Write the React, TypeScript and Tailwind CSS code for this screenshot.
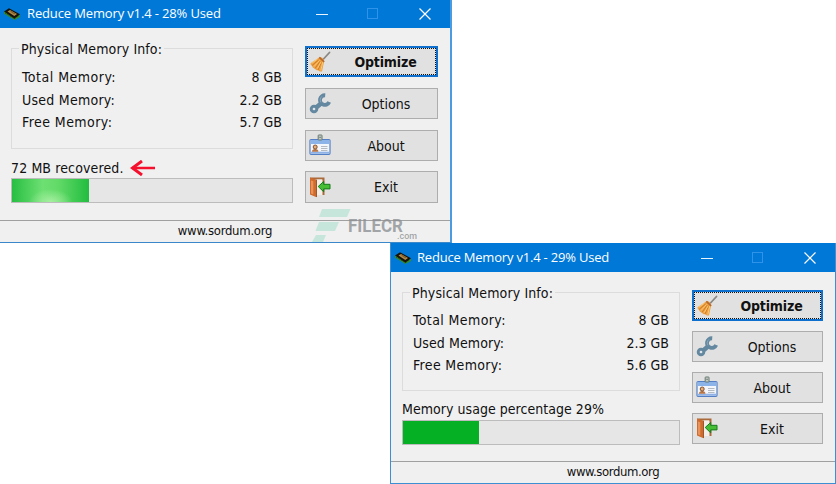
import type { ReactNode } from "react";

function ChipIcon() {
  return (
    <svg viewBox="0 0 18 14" className="h-[14px] w-[18px] shrink-0">
      <path d="M1 5 5 2.500 9 4l8 4.500v1.600L11.500 13 1 6.800z" fill="#2f8f2f" />
      <path d="M1 4.500 6 1.200 17 7.200 11.500 11.800z" fill="#15120c" />
      <path d="M4.500 4.400 7 3 14 6.900 11.300 8.900z" fill="#b08a48" />
      <path d="M7 4.600 8.300 4 12.400 6.400 11.200 7.300z" fill="#7d5f30" />
      <path d="M2 6 11.300 11.600l4.400-3" fill="none" stroke="#3d3414" strokeWidth=".8" strokeDasharray="1 1" />
    </svg>
  );
}

function BroomIcon() {
  return (
    <svg viewBox="0 0 22 22" className="size-[22px]">
      <path d="M20.500 1.500 14.500 8" stroke="#8b8783" strokeWidth="1.800" strokeLinecap="round" />
      <path d="M10.500 6.200c1.800-.6 4.800 2 4.600 4.200L13 20.500c-1.500.3-3-.2-4-1.200-1.300.2-2.300-.5-2.900-1.600-1.700-.4-2.700-1.300-3-2.700-.9-.6-1.500-1.500-1.600-2.800z" fill="#eda044" />
      <path d="M9.500 9 3 14.500M11 10.200 6 17.500M12.500 11.200 9 19" stroke="#c9741f" strokeWidth=".8" />
      <path d="M8.500 8 2.800 12.300M10.500 9.500 5 15.500M12 11 8.300 17.500M13.800 11 11.800 19.500" stroke="#ffd27a" strokeWidth=".8" />
      <path d="m10.300 6.300 4.900 4.500" stroke="#b46a2e" strokeWidth="1.600" />
    </svg>
  );
}

function WrenchIcon() {
  return (
    <svg viewBox="0 0 22 22" className="size-[22px]">
      <path d="m6 15.500 6-5" stroke="#6388a0" strokeWidth="4.600" />
      <path d="M16.200 2.300A4.800 4.800 0 1 0 20.200 9" fill="none" stroke="#6388a0" strokeWidth="3.900" />
      <circle cx="5" cy="16" r="2.800" fill="#dfe5e8" stroke="#6388a0" strokeWidth="2.900" />
      <path d="M13 3.300c-2 1.700-2.200 4.200-1.100 6" stroke="#8eacba" strokeWidth=".9" fill="none" />
    </svg>
  );
}

function CardIcon() {
  return (
    <svg viewBox="0 0 22 22" className="-mt-[2px] size-[22px]">
      <rect x="1" y="5.500" width="20" height="14.800" rx="1" fill="#f3f7fc" stroke="#557fc4" strokeWidth="1.200" />
      <path d="M1.600 6h18.800v4H1.600z" fill="#8db4e8" />
      <path d="M1.600 18.700h18.800" stroke="#8fb2e6" strokeWidth="2" />
      <rect x="9.200" y="1" width="3.800" height="5" rx=".5" fill="#c4cec7" stroke="#66766e" />
      <path d="M10.300 3.300h1.600" stroke="#66766e" />
      <path d="M3 17.800c0-2 1.200-2.800 3.200-2.800s3.200.8 3.200 2.800z" fill="#b87545" />
      <circle cx="6.200" cy="13" r="2" fill="#e9ae76" stroke="#75452a" strokeWidth=".9" />
      <path d="M12 12.500h6.500M12 14.500h6.500M12 16.500h6.500" stroke="#adb2b8" strokeWidth=".9" />
    </svg>
  );
}

function DoorIcon() {
  return (
    <svg viewBox="0 0 22 22" className="-mt-px size-[22px]">
      <path d="M1 1.500h14.500V19H13V3.500H2z" fill="#a96a3c" />
      <path d="M8 3.500h5.500V19H8z" fill="#f3efe8" />
      <path d="M1 1.500 7.500 3.800v17.400L1 18.500z" fill="#cf6b2c" />
      <path d="m2 4.500 2.300.7v13.300L2 17.600z" fill="#e9935a" />
      <path d="M7.500 4v17" stroke="#8d4317" strokeWidth=".8" />
      <path d="m9.200 10.500 5.500-5v2.800h6.300v4.600h-6.300v2.900z" fill="#45bd35" stroke="#167b1c" strokeWidth="1" />
    </svg>
  );
}

function ActionButton({ icon, label, primary, size }: { icon: ReactNode; label: string; primary?: boolean; size: string }) {
  return (
    <button
      className={`relative flex items-center bg-[#e1e1e1] ${size} ${
        primary ? "border-2 border-[#0f70cd] pl-[2px]" : "border border-[#adadad] pl-[3px]"
      }`}
    >
      {primary && <span className="absolute inset-0 border border-dotted border-[#111]" />}
      {icon}
      <span
        className={`flex-1 pl-[4px] text-center text-[14px] leading-none ${
          primary ? "font-bold tracking-[-0.15px]" : ""
        }`}
      >
        {label}
      </span>
    </button>
  );
}

type Layout = {
  frame: string;
  title: string;
  titleText: string;
  body: string;
  left: string;
  group: string;
  status: string;
  bar: string;
  fill: string;
  buttons: string;
  buttonSizes: string[];
  footer: string;
};

type Reading = { name: string; value: string; tracking: string };

type MemoryWindowProps = {
  layout: Layout;
  title: string;
  values: Reading[];
  message: ReactNode;
};

function MemoryWindow({ layout, title, values, message }: MemoryWindowProps) {
  return (
    <section className={`absolute flex flex-col bg-[#f0f0f0] ${layout.frame}`}>
      <header className={`flex shrink-0 items-center bg-[#0078d7] text-white ${layout.title}`}>
        <ChipIcon />
        <h1 className={`flex-1 whitespace-nowrap font-['Open_Sans',sans-serif] text-[13px] leading-none ${layout.titleText}`}>{title}</h1>
        <svg viewBox="0 0 116 12" className="h-[12px] w-[116px]" fill="none">
          <path d="M0 6.500h12" stroke="#e8f4ff" />
          <rect x="51.500" y=".5" width="10" height="10" stroke="#2f93ea" />
          <path d="m103.500 .5 11 11m0-11-11 11" stroke="#fff" strokeWidth="1.200" />
        </svg>
      </header>
      <main className={`flex flex-1 items-start ${layout.body}`}>
        <div className={`flex flex-col ${layout.left}`}>
          <fieldset className={`relative border border-[#dcdcdc] ${layout.group}`}>
            <span className="absolute -top-[8px] left-[7px] bg-[#f0f0f0] px-[2px] leading-[16px] tracking-[0.12px] whitespace-nowrap">Physical Memory Info:</span>
            {values.map(({ name, value, tracking }) => (
              <div key={name} className="flex h-[22.5px] items-center justify-between">
                <span className={tracking}>{name}</span>
                <span>{value}</span>
              </div>
            ))}
          </fieldset>
          <div className={`flex items-center whitespace-nowrap ${layout.status}`}>{message}</div>
          <div className={`border border-[#bcbcbc] bg-[#e6e6e6] ${layout.bar}`}>
            <div className={`h-full ${layout.fill}`} />
          </div>
        </div>
        <div className={`flex flex-col ${layout.buttons}`}>
          <ActionButton primary icon={<BroomIcon />} label="Optimize" size={layout.buttonSizes[0]} />
          <ActionButton icon={<WrenchIcon />} label="Options" size={layout.buttonSizes[1]} />
          <ActionButton icon={<CardIcon />} label="About" size={layout.buttonSizes[2]} />
          <ActionButton icon={<DoorIcon />} label="Exit" size={layout.buttonSizes[3]} />
        </div>
      </main>
      <footer className={`shrink-0 border-t border-[#a0a0a0] text-center text-[13px] ${layout.footer}`}>www.sordum.org</footer>
    </section>
  );
}

const first: Layout = {
  frame: "left-0 top-0 h-[243px] w-[452px] border-r-2 border-b border-r-[#4a9be0] border-b-[#3a87ca]",
  title: "h-[28px] pl-[3px] pr-[18px]",
  titleText: "pl-[6px] pb-px tracking-[-0.14px]",
  body: "pl-[11px] pt-[18px]",
  left: "w-[282px]",
  group: "mt-[2px] h-[101px] pt-[17px] pl-[10px] pr-[10px]",
  status: "h-[29px] pt-[8px] tracking-[0.12px]",
  bar: "h-[25px]",
  fill: "w-[77px] bg-[radial-gradient(ellipse_at_bottom,#a5efa0_0%,transparent_40%),linear-gradient(90deg,#27be43_0%,#6ee073_40%,#62da68_60%,#22bd40_100%)]",
  buttons: "ml-[12px] w-[133px] gap-[10px]",
  buttonSizes: ["h-[31px]", "mt-px h-[31px]", "mt-px h-[31px]", "h-[32px]"],
  footer: "h-[22px] leading-[20px] tracking-[-0.27px]",
};

const second: Layout = {
  frame: "left-[390px] top-[243px] h-[241px] w-[446px] border-x border-b border-[#3c8fd2]",
  title: "h-[29px] pl-[3px] pr-[18px]",
  titleText: "pl-[5px] pb-px tracking-[-0.2px]",
  body: "pl-[11px] pt-[18px]",
  left: "w-[278px]",
  group: "mt-[2px] h-[99px] pt-[16px] pl-[10px] pr-[10px]",
  status: "h-[29px] pt-[7px] tracking-[0.04px]",
  bar: "h-[25px]",
  fill: "w-[76px] bg-[#06b025]",
  buttons: "ml-[12px] w-[131px] gap-[10px]",
  buttonSizes: ["h-[31px]", "h-[31px]", "h-[31px]", "h-[31px]"],
  footer: "h-[22px] leading-[20px] tracking-[-0.4px]",
};

function Watermark() {
  return (
    <svg viewBox="0 0 110 36" className="absolute left-[310px] top-[207px] h-[36px] w-[110px]">
      <g fill="#a5dfca" fillOpacity=".55">
        <path d="M12 2h28.500l-3.500 8H9z" />
        <path d="M9 15h20l-4 9H5.500z" />
        <path d="M6 28h10l-3 7H2z" />
      </g>
      <g fill="#8d9094" fillOpacity=".8" fontFamily="Roboto, sans-serif">
        <text x="38" y="25" fontSize="17.500" fontWeight="700" textLength="55" lengthAdjust="spacingAndGlyphs">FILECR</text>
        <text x="87" y="32" fontSize="8.500" fontWeight="500" textLength="20" lengthAdjust="spacingAndGlyphs">.com</text>
      </g>
    </svg>
  );
}

export default function App() {
  return (
    <div className="relative h-[484px] w-[836px] overflow-hidden bg-white font-['DejaVu_Sans_Condensed','DejaVu_Sans',sans-serif] text-[14px] leading-none text-[#111]">
      <MemoryWindow
        layout={first}
        title="Reduce Memory v1.4 - 28% Used"
        values={[
          { name: "Total Memory:", value: "8 GB", tracking: "tracking-[0.5px]" },
          { name: "Used Memory:", value: "2.2 GB", tracking: "tracking-[0.25px]" },
          { name: "Free Memory:", value: "5.7 GB", tracking: "tracking-[0.45px]" },
        ]}
        message={
          <>
            <span>72 MB recovered.</span>
            <svg viewBox="0 0 26 16" className="ml-[6px] h-[16px] w-[26px]" fill="none" stroke="#f5112d">
              <path d="M2 8h23" strokeWidth="2.500" />
              <path d="M12 1 2.500 8l9.500 7" strokeWidth="3" />
            </svg>
          </>
        }
      />
      <Watermark />
      <MemoryWindow
        layout={second}
        title="Reduce Memory v1.4 - 29% Used"
        values={[
          { name: "Total Memory:", value: "8 GB", tracking: "tracking-[0.4px]" },
          { name: "Used Memory:", value: "2.3 GB", tracking: "tracking-[0.1px]" },
          { name: "Free Memory:", value: "5.6 GB", tracking: "tracking-[0.35px]" },
        ]}
        message={<span>Memory usage percentage 29%</span>}
      />
    </div>
  );
}
